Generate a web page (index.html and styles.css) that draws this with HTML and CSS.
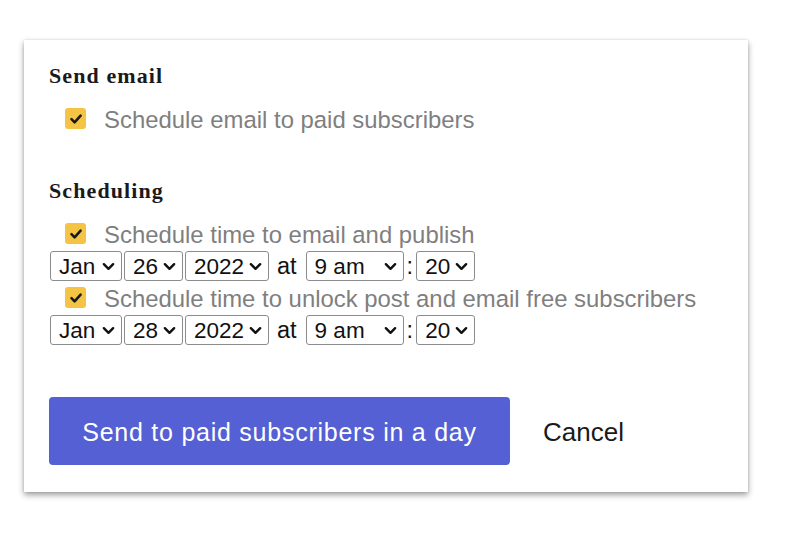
FILE: index.html
```html
<!DOCTYPE html>
<html lang="en">
<head>
<meta charset="utf-8">
<title>Send email</title>
<link rel="stylesheet" href="styles.css">
</head>
<body>
<div class="card">
  <h2 class="section-title">Send email</h2>
  <div class="check-row">
    <span class="checkbox"><svg viewBox="0 0 20 20" width="20" height="20"><path d="M5.5 10.2 L8.6 13.3 L14.6 6.6" fill="none" stroke="#1a1a1a" stroke-width="2.6" stroke-linecap="round" stroke-linejoin="round"/></svg></span>
    <span class="check-label">Schedule email to paid subscribers</span>
  </div>

  <h2 class="section-title second">Scheduling</h2>
  <div class="check-row">
    <span class="checkbox"><svg viewBox="0 0 20 20" width="20" height="20"><path d="M5.5 10.2 L8.6 13.3 L14.6 6.6" fill="none" stroke="#1a1a1a" stroke-width="2.6" stroke-linecap="round" stroke-linejoin="round"/></svg></span>
    <span class="check-label">Schedule time to email and publish</span>
  </div>
  <div class="date-row">
    <span class="sel sel-month">Jan<svg class="chev" viewBox="0 0 14 9" width="13" height="9"><path d="M2 2 L7 7 L12 2" fill="none" stroke="#111" stroke-width="2.6" stroke-linecap="round" stroke-linejoin="round"/></svg></span>
    <span class="sel sel-day">26<svg class="chev" viewBox="0 0 14 9" width="13" height="9"><path d="M2 2 L7 7 L12 2" fill="none" stroke="#111" stroke-width="2.6" stroke-linecap="round" stroke-linejoin="round"/></svg></span>
    <span class="sel sel-year">2022<svg class="chev" viewBox="0 0 14 9" width="13" height="9"><path d="M2 2 L7 7 L12 2" fill="none" stroke="#111" stroke-width="2.6" stroke-linecap="round" stroke-linejoin="round"/></svg></span>
    <span class="at">at</span>
    <span class="sel sel-hour">9 am<svg class="chev" viewBox="0 0 14 9" width="13" height="9"><path d="M2 2 L7 7 L12 2" fill="none" stroke="#111" stroke-width="2.6" stroke-linecap="round" stroke-linejoin="round"/></svg></span>
    <span class="colon">:</span>
    <span class="sel sel-min">20<svg class="chev" viewBox="0 0 14 9" width="13" height="9"><path d="M2 2 L7 7 L12 2" fill="none" stroke="#111" stroke-width="2.6" stroke-linecap="round" stroke-linejoin="round"/></svg></span>
  </div>
  <div class="check-row">
    <span class="checkbox"><svg viewBox="0 0 20 20" width="20" height="20"><path d="M5.5 10.2 L8.6 13.3 L14.6 6.6" fill="none" stroke="#1a1a1a" stroke-width="2.6" stroke-linecap="round" stroke-linejoin="round"/></svg></span>
    <span class="check-label">Schedule time to unlock post and email free subscribers</span>
  </div>
  <div class="date-row">
    <span class="sel sel-month">Jan<svg class="chev" viewBox="0 0 14 9" width="13" height="9"><path d="M2 2 L7 7 L12 2" fill="none" stroke="#111" stroke-width="2.6" stroke-linecap="round" stroke-linejoin="round"/></svg></span>
    <span class="sel sel-day">28<svg class="chev" viewBox="0 0 14 9" width="13" height="9"><path d="M2 2 L7 7 L12 2" fill="none" stroke="#111" stroke-width="2.6" stroke-linecap="round" stroke-linejoin="round"/></svg></span>
    <span class="sel sel-year">2022<svg class="chev" viewBox="0 0 14 9" width="13" height="9"><path d="M2 2 L7 7 L12 2" fill="none" stroke="#111" stroke-width="2.6" stroke-linecap="round" stroke-linejoin="round"/></svg></span>
    <span class="at">at</span>
    <span class="sel sel-hour">9 am<svg class="chev" viewBox="0 0 14 9" width="13" height="9"><path d="M2 2 L7 7 L12 2" fill="none" stroke="#111" stroke-width="2.6" stroke-linecap="round" stroke-linejoin="round"/></svg></span>
    <span class="colon">:</span>
    <span class="sel sel-min">20<svg class="chev" viewBox="0 0 14 9" width="13" height="9"><path d="M2 2 L7 7 L12 2" fill="none" stroke="#111" stroke-width="2.6" stroke-linecap="round" stroke-linejoin="round"/></svg></span>
  </div>

  <div class="actions">
    <button class="primary">Send to paid subscribers in a day</button>
    <button class="cancel">Cancel</button>
  </div>
</div>
</body>
</html>
```

FILE: styles.css
```css
* { box-sizing: border-box; }

html, body {
  margin: 0;
  padding: 0;
  background: #ffffff;
}

html {
  min-height: 533px;
}

body {
  font-family: "Liberation Sans", Arial, sans-serif;
  padding: 40px 0 41px 24px;
  min-height: 533px;
}

.card {
  width: 724px;
  height: 452px;
  background: #fff;
  padding: 23px 25px 27px 25px;
  box-shadow: 0 3px 6px rgba(0, 0, 0, 0.38), 0 0 2px rgba(0, 0, 0, 0.12);
}

.section-title {
  margin: 0 0 13px 0;
  font-family: "Liberation Serif", "Times New Roman", serif;
  font-weight: bold;
  font-size: 22px;
  line-height: 26px;
  letter-spacing: 1.1px;
  color: #1a1a1a;
}

.section-title.second {
  margin-top: 43px;
}

.check-row {
  display: flex;
  align-items: center;
  height: 33px;
  padding-left: 16px;
}

.checkbox {
  width: 21px;
  height: 21px;
  border-radius: 3px;
  background: #f6c445;
  display: flex;
  align-items: center;
  justify-content: center;
  flex: none;
  margin-right: 18px;
}

.check-label {
  font-size: 23.9px;
  line-height: 33px;
  color: #7f7f7f;
  padding-top: 2px;
  white-space: nowrap;
}

.date-row {
  display: flex;
  align-items: center;
  height: 30px;
  margin: 1px 0 0 1px;
  gap: 2px;
}

.sel {
  display: flex;
  align-items: center;
  justify-content: space-between;
  height: 30px;
  padding: 1px 6px 0 8px;
  border: 1px solid #8c8c8c;
  border-radius: 3px;
  font-size: 22.5px;
  color: #111;
  white-space: nowrap;
}

.chev { flex: none; }

.sel-month { width: 72px; }
.sel-day { width: 59px; }
.sel-year { width: 84px; }
.sel-hour { width: 98px; }
.sel-min { width: 59px; }

.at {
  font-size: 23.5px;
  color: #111;
  margin: 0 7px 0 6px;
  padding-top: 1px;
}

.colon {
  font-size: 23.5px;
  color: #111;
  margin: 0 1px;
}

.actions {
  display: flex;
  align-items: center;
  margin-top: 52px;
}

.primary {
  width: 461px;
  height: 68px;
  border: none;
  border-radius: 4px;
  background: #5460d3;
  color: #fff;
  font-family: "Liberation Sans", Arial, sans-serif;
  font-size: 25px;
  letter-spacing: 0.75px;
  padding: 2px 0 0 0;
  cursor: pointer;
}

.cancel {
  margin-left: 33px;
  border: none;
  background: none;
  padding: 2px 0 0 0;
  font-family: "Liberation Sans", Arial, sans-serif;
  font-size: 26px;
  color: #1a1a1a;
  cursor: pointer;
}
```
